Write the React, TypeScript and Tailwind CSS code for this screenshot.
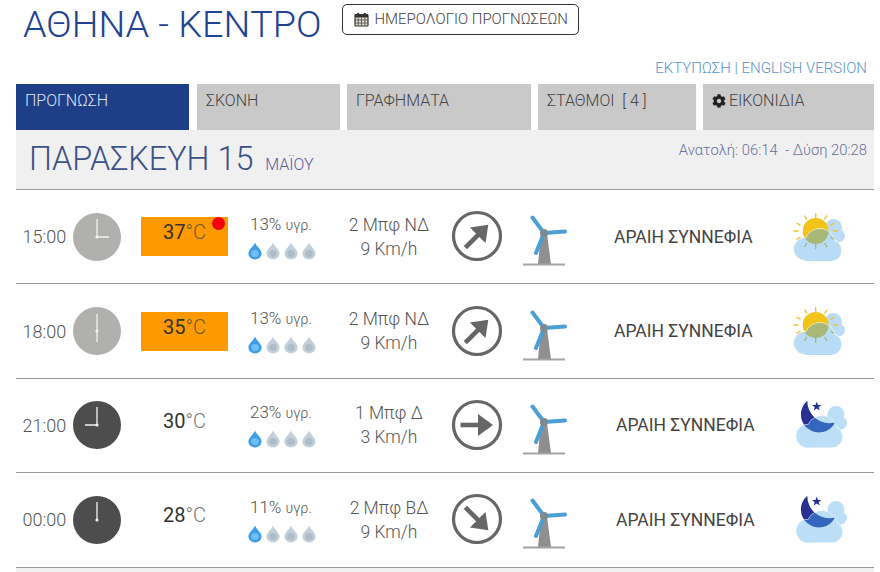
import { FaCog } from "react-icons/fa";

const font = { fontFamily: "Roboto, sans-serif" };

function CalendarIcon() {
  return (
    <svg width="15" height="15" viewBox="0 0 15 15">
      <rect x="1" y="2.5" width="13" height="11.5" rx="1" fill="#e9dfd3" stroke="#333" strokeWidth="1.2" />
      <rect x="1" y="2.5" width="13" height="3" fill="#333" />
      <rect x="3.2" y="0.8" width="2" height="3.4" rx="0.8" fill="#333" />
      <rect x="9.8" y="0.8" width="2" height="3.4" rx="0.8" fill="#333" />
      <path d="M1 8h13M1 11h13M4.2 5.5v8.5M7.5 5.5v8.5M10.8 5.5v8.5" stroke="#444" strokeWidth="0.8" />
    </svg>
  );
}

function Clock({ night, hands }: { night: boolean; hands: string }) {
  return (
    <svg width="48" height="48" viewBox="0 0 48 48">
      <circle cx="24" cy="24" r="24" fill={night ? "#4d4d4d" : "#b0b0ae"} />
      <path d={hands} stroke="#f2f2f2" strokeWidth="1.3" fill="none" />
      <circle cx="24" cy="24" r="1.6" fill="#f2f2f2" />
    </svg>
  );
}

function Drop({ on }: { on: boolean }) {
  return (
    <svg width="14" height="18" viewBox="0 0 14 18">
      <path d="M7 0.5C8 4 13.6 7.5 13.6 11.5A6.6 6 0 0 1 0.4 11.5C0.4 7.5 6 4 7 0.5Z" fill={on ? "#3f9de8" : "#c3d0da"} />
      <ellipse cx="7" cy="11.5" rx="3.8" ry="3.6" fill={on ? "#6fbef5" : "#adbcc6"} />
    </svg>
  );
}

function Arrow({ angle }: { angle: number }) {
  return (
    <svg width="52" height="52" viewBox="0 0 52 52">
      <circle cx="26" cy="26" r="23.5" fill="none" stroke="#666" strokeWidth="3.2" />
      <g transform={`rotate(${angle} 26 26)`}>
        <path d="M9.5 26H28" stroke="#666" strokeWidth="4.6" />
        <path d="M27 15L42 26L27 37Z" fill="#666" />
      </g>
    </svg>
  );
}

function Turbine() {
  return (
    <svg width="44" height="52" viewBox="0 0 44 52">
      <path d="M18 20H24L28 50H15Z" fill="#8f8f8f" />
      <path d="M0 50.5H42" stroke="#a3a3a3" strokeWidth="2" />
      <path d="M21 19L9.5 3.5M21 19L42 17.5M21 19L13 39" stroke="#4b9fd5" strokeWidth="4" strokeLinecap="round" />
      <circle cx="21" cy="19" r="4" fill="#7f8a90" />
    </svg>
  );
}

function SunIcon({ id }: { id: string }) {
  const rays = "M25.7 2.3V7M14.5 4.5L16.8 8.5M36.9 4.5L34.6 8.5M6.5 12L10.5 14.3M44.5 12L40.5 14.3M3.5 20H8.5M43 20H48M6.5 28.5L10.5 26M44.5 28.5L40.5 26M14.5 36L16.8 32M36.9 36L34.6 32M25.7 38V33";
  return (
    <svg width="60" height="52" viewBox="0 0 60 52">
      <defs>
        <clipPath id={id}>
          <circle cx="15" cy="38" r="11" />
          <circle cx="30" cy="33" r="15" />
          <circle cx="41" cy="39.5" r="10.5" />
          <rect x="15" y="36" width="26" height="14" />
        </clipPath>
      </defs>
      <circle cx="43.5" cy="16.5" r="8.5" fill="#bcdcf5" />
      <circle cx="48.5" cy="25" r="6.5" fill="#bcdcf5" />
      <rect x="36" y="18" width="12" height="14" fill="#bcdcf5" />
      <path d={rays} stroke="#efc22a" strokeWidth="1.4" />
      <circle cx="25.7" cy="20" r="13" fill="#f2c419" />
      <circle cx="15" cy="38" r="11" fill="#fdf6d8" stroke="#fdf6d8" strokeWidth="1.4" />
      <circle cx="30" cy="33" r="15" fill="#fdf6d8" stroke="#fdf6d8" strokeWidth="1.4" />
      <circle cx="41" cy="39.5" r="10.5" fill="#ffffff" stroke="#ffffff" strokeWidth="1.4" />
      <g clipPath={`url(#${id})`}>
        <rect x="0" y="0" width="60" height="52" fill="#b9dcf6" />
        <path d={rays} stroke="#a3b585" strokeWidth="1.4" />
        <circle cx="25.7" cy="20" r="13" fill="#a9b877" />
      </g>
    </svg>
  );
}

function MoonIcon({ id }: { id: string }) {
  const moon = "M17.3 1.7A18 18 0 1 0 45 23.5A22 22 0 0 1 17.3 1.7Z";
  return (
    <svg width="60" height="52" viewBox="0 0 60 52">
      <defs>
        <clipPath id={id}>
          <circle cx="18" cy="37" r="11.5" />
          <circle cx="32" cy="32" r="15" />
          <circle cx="42" cy="38" r="10.5" />
          <rect x="18" y="36" width="24" height="12.5" />
        </clipPath>
      </defs>
      <circle cx="46" cy="15.5" r="8.5" fill="#bcdff7" />
      <circle cx="50.5" cy="24" r="6.5" fill="#bcdff7" />
      <rect x="38" y="17" width="12" height="14" fill="#bcdff7" />
      <path d={moon} fill="#2a2f92" />
      <path d="M26.7 2.8L28 6H31.4L28.7 8.2L29.7 11.6L26.7 9.6L23.7 11.6L24.7 8.2L22 6H25.4Z" fill="#2a2f92" />
      <circle cx="18" cy="37" r="11.5" fill="#e8f2fb" stroke="#e8f2fb" strokeWidth="1.2" />
      <circle cx="32" cy="32" r="15" fill="#e8f2fb" stroke="#e8f2fb" strokeWidth="1.2" />
      <circle cx="42" cy="38" r="10.5" fill="#ffffff" stroke="#ffffff" strokeWidth="1.2" />
      <g clipPath={`url(#${id})`}>
        <rect x="0" y="0" width="60" height="52" fill="#bcdff7" />
        <path d={moon} fill="#3566bd" />
      </g>
    </svg>
  );
}

const rows = [
  { time: "15:00", night: false, hands: "M24 24V6M24 24H36", temp: "37", orange: true, dot: true, hum: "13%", wind: "2 Μπφ ΝΔ", kmh: "9 Km/h", angle: -45, shift: false },
  { time: "18:00", night: false, hands: "M24 24V7M24 24V35", temp: "35", orange: true, dot: false, hum: "13%", wind: "2 Μπφ ΝΔ", kmh: "9 Km/h", angle: -45, shift: false },
  { time: "21:00", night: true, hands: "M24 24V6M24 24H12", temp: "30", orange: false, dot: false, hum: "23%", wind: "1 Μπφ Δ", kmh: "3 Km/h", angle: 0, shift: true },
  { time: "00:00", night: true, hands: "M24 24V6", temp: "28", orange: false, dot: false, hum: "11%", wind: "2 Μπφ ΒΔ", kmh: "9 Km/h", angle: 45, shift: true },
];

const tabs = [
  { w: "w-[173px]", label: "ΠΡΟΓΝΩΣΗ", active: true },
  { w: "w-[143px] ml-2", label: "ΣΚΟΝΗ" },
  { w: "w-[184px] ml-[7px]", label: "ΓΡΑΦΗΜΑΤΑ" },
  { w: "w-[158px] ml-[7px]", label: "ΣΤΑΘΜΟΙ  [ 4 ]" },
  { w: "w-[171px] ml-[7px]", label: "ΕΙΚΟΝΙΔΙΑ", gear: true },
];

export default function App() {
  return (
    <div style={font} className="w-[880px] h-[572px] overflow-hidden bg-white pl-4 font-light">
      <div className="h-[60px] flex items-start pl-[7px]">
        <h1 className="text-[37.7px] leading-[48px] font-light text-[#1f4390]">ΑΘΗΝΑ - ΚΕΝΤΡΟ</h1>
        <div className="ml-[21px] mt-1 w-[237px] h-[31px] border border-[#333] rounded-[5px] flex items-center pl-[11px] gap-[5px] text-[15px] text-[#444]">
          <CalendarIcon />
          <span>ΗΜΕΡΟΛΟΓΙΟ ΠΡΟΓΝΩΣΕΩΝ</span>
        </div>
      </div>
      <div className="w-[858px] h-4 mb-2 flex justify-end items-center pr-[7px] text-[15px] leading-4 text-[#5b93c9]">ΕΚΤΥΠΩΣΗ | ENGLISH VERSION</div>
      <div className="flex w-[858px]">
        {tabs.map((t) => (
          <div key={t.label} className={`${t.w} h-[46px] pl-[9px] pt-[8px] text-[16px] leading-[18px] whitespace-pre flex items-start gap-[3px] ${t.active ? "bg-[#1e3f87] text-[#dfe6f5]" : "bg-[#c9c9c9] text-[#444]"}`}>
            {t.gear && <FaCog className="text-[#222] text-[14px] mt-[2px]" />}
            {t.label}
          </div>
        ))}
      </div>
      <div className="h-[60px] w-[858px] bg-[#f0f0f0] border-b border-[#999] flex justify-between pl-[13px] pr-[7px]">
        <div className="flex items-baseline pt-[5px]">
          <span className="text-[32.4px] leading-[48px] text-[#3d5088]">ΠΑΡΑΣΚΕΥΗ 15</span>
          <span className="ml-3 mt-[1px] text-[16px] text-[#5f5a9e]">ΜΑΪΟΥ</span>
        </div>
        <div className="pt-[11px] text-[14.8px] leading-[18px] text-[#6a7099] whitespace-pre">Ανατολή: 06:14  - Δύση 20:28</div>
      </div>
      {rows.map((r, i) => (
        <div key={r.time} className="w-[858px] h-[94.4px] border-b border-[#999] flex items-center text-[#555]">
          <div className="w-[57px] pl-[6.5px] text-[18px]">{r.time}</div>
          <Clock night={r.night} hands={r.hands} />
          <div className={`relative ml-[20px] w-[87px] h-[39px] text-center pt-[2px] text-[20px] leading-[26px] ${r.orange ? "bg-[#ff9900]" : ""}`}>
            <span className="font-normal text-[#333]">{r.temp}</span>
            <span className={r.orange ? "text-[#6b5a30]" : "text-[#777]"}>°C</span>
            {r.dot && <span className="absolute right-[3px] top-0 w-[13px] h-[13px] rounded-full bg-[#f5000a]" />}
          </div>
          <div className="ml-[20px] w-[70px] flex flex-col items-start">
            <div className="whitespace-nowrap text-[17px] leading-5 pl-[2px] mb-[6px]">{r.hum} <span className="text-[14.5px]">υγρ.</span></div>
            <div className="flex gap-[4px]">
              <Drop on /><Drop on={false} /><Drop on={false} /><Drop on={false} />
            </div>
          </div>
          <div className="ml-[8px] w-[126px] text-center text-[17.5px] leading-6">
            <div>{r.wind}</div>
            <div>{r.kmh}</div>
          </div>
          <div className="ml-[-1px] -mt-[1px]"><Arrow angle={r.angle} /></div>
          <div className="ml-[20px] mt-[7px]"><Turbine /></div>
          <div className={`${r.shift ? "ml-[49px]" : "ml-[47px]"} text-[17.5px] font-normal text-[#444] whitespace-nowrap w-[139px]`}>ΑΡΑΙΗ ΣΥΝΝΕΦΙΑ</div>
          <div className={r.shift ? "ml-[35px]" : "ml-[37px]"}>{r.shift ? <MoonIcon id={`m${i}`} /> : <SunIcon id={`s${i}`} />}</div>
        </div>
      ))}
      <div className="w-[858px] h-2 bg-[#f0f0f0]" />
    </div>
  );
}
